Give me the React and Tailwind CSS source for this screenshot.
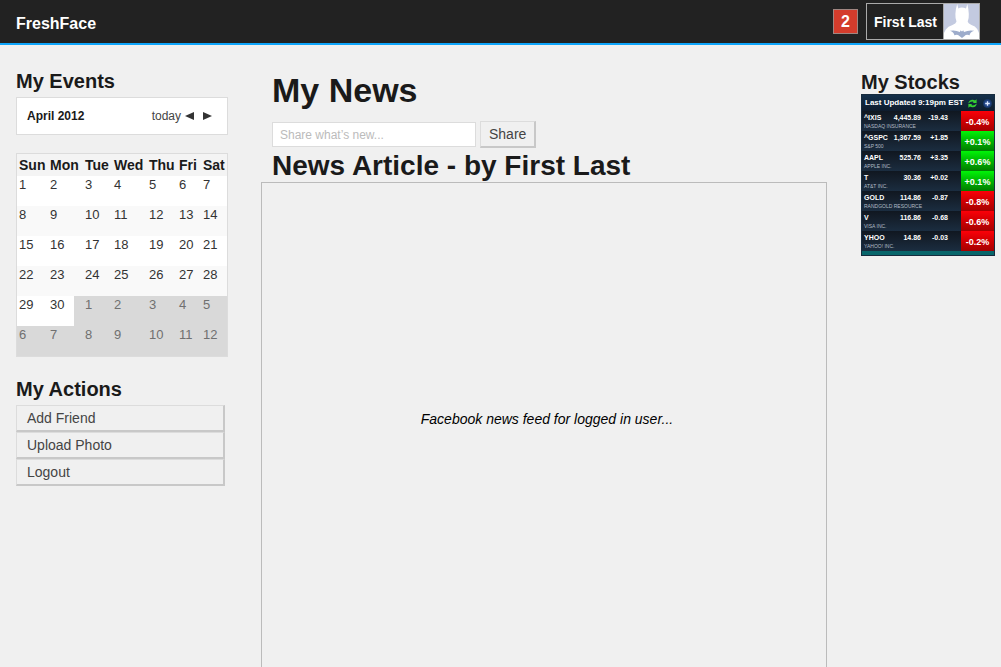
import React from "react";

const weekdays = ["Sun", "Mon", "Tue", "Wed", "Thu", "Fri", "Sat"];

const columns = ["w-[31px]", "w-[26px]", "w-[38px]", "w-[35px]", "w-[30px]", "w-[24px]", "w-[26px]"];

const weeks = [
  [1, 2, 3, 4, 5, 6, 7],
  [8, 9, 10, 11, 12, 13, 14],
  [15, 16, 17, 18, 19, 20, 21],
  [22, 23, 24, 25, 26, 27, 28],
  [29, 30, 1, 2, 3, 4, 5],
  [6, 7, 8, 9, 10, 11, 12],
];

const actions = ["Add Friend", "Upload Photo", "Logout"];

const stocks = [
  { symbol: "^IXIS", name: "NASDAQ INSURANCE", price: "4,445.89", change: "-19.43", percent: "-0.4%" },
  { symbol: "^GSPC", name: "S&P 500", price: "1,367.59", change: "+1.85", percent: "+0.1%" },
  { symbol: "AAPL", name: "APPLE INC.", price: "525.76", change: "+3.35", percent: "+0.6%" },
  { symbol: "T", name: "AT&T INC.", price: "30.36", change: "+0.02", percent: "+0.1%" },
  { symbol: "GOLD", name: "RANDGOLD RESOURCE", price: "114.86", change: "-0.87", percent: "-0.8%" },
  { symbol: "V", name: "VISA INC.", price: "116.86", change: "-0.68", percent: "-0.6%" },
  { symbol: "YHOO", name: "YAHOO! INC.", price: "14.86", change: "-0.03", percent: "-0.2%" },
];

const raised =
  "border border-t-[#dcdcdc] border-l-[#dcdcdc] border-r-2 border-b-2 border-r-[#c8c8c8] border-b-[#c8c8c8] bg-[#f0f0f0] text-sm text-[#444]";

function Avatar() {
  return (
    <svg viewBox="0 0 35 35" className="size-[35px]" role="img" aria-label="Profile picture">
      <rect width="35" height="35" fill="#c3cae0" />
      <path
        d="M13.2 0 L14.3 4.6 Q17.5 2.6 22 4.6 L23.3 0 Q24.6 5 24.8 10 Q25 15 23.7 17.5 Q24 19.5 27 20.8 Q31.5 22 33.2 25 L35 29 V35 H0 V29 L1.8 25.5 Q4 22 8.5 21 Q12 19.5 12.5 17.5 Q11.2 15 11.4 10 Q11.8 4 13.2 0 Z"
        fill="#fff"
      />
      <path
        d="M6 26.8 Q11 25.6 15.8 28 L16.7 26.3 L17.4 27.2 H18.4 L19.2 26.3 L20 28 Q25 25.6 30.2 26.8 Q26 28.2 25.6 31.2 Q22 30.2 20.6 32 L18 34 L15.4 32 Q13.5 30.2 10.4 31.2 Q9.8 28.2 6 26.8 Z"
        fill="#9daccb"
      />
    </svg>
  );
}

function Header() {
  return (
    <header className="flex h-[45px] items-start justify-between border-b-2 border-[#0ea5fa] bg-[#222] pr-[21px] pl-4 text-white">
      <a href="#home" className="pt-3 text-base leading-6 font-bold">
        FreshFace
      </a>
      <div className="flex items-start gap-2 pt-[3px]">
        <button
          type="button"
          aria-label="2 notifications"
          className="mt-1.5 size-[25px] border border-[#a08681] bg-[#d43c2c] text-base leading-5 font-bold"
        >
          2
        </button>
        <a href="#profile" className="flex h-[37px] items-center border border-[#aaa] pl-[7px] text-sm font-bold">
          <span className="pr-1.5">First Last</span>
          <span className="border-l border-[#aaa]">
            <Avatar />
          </span>
        </a>
      </div>
    </header>
  );
}

function Calendar() {
  return (
    <section>
      <h2 className="text-xl leading-6 font-bold">My Events</h2>
      <div className="mt-1 flex h-[38px] items-center border border-[#dcdcdc] bg-white px-2.5 text-xs">
        <span className="flex-1 font-bold">April 2012</span>
        <button type="button" className="text-[#444]">today</button>
        <button type="button" aria-label="Previous month" className="ml-1 text-[#333]">
          <svg viewBox="0 0 9 8" className="h-2 w-[9px]" fill="currentColor"><path d="M0 4 L9 0 V8 Z" /></svg>
        </button>
        <button type="button" aria-label="Next month" className="mr-[5px] ml-[9px] text-[#333]">
          <svg viewBox="0 0 9 8" className="h-2 w-[9px]" fill="currentColor"><path d="M9 4 L0 0 V8 Z" /></svg>
        </button>
      </div>
      <div className="mt-[18px] border border-[#dcdcdc]">
        <table className="w-full table-fixed border-collapse">
          <colgroup>
            {columns.map((c) => (
              <col key={c} className={c} />
            ))}
          </colgroup>
          <thead>
            <tr className="h-[22px] bg-[#f4f4f4] text-left text-sm leading-[22px]">
              {weekdays.map((d, i) => (
                <th key={d} className={i === 2 ? "p-0 pl-[11px]" : "p-0 pl-0.5"}>{d}</th>
              ))}
            </tr>
          </thead>
          <tbody>
            {weeks.map((week, w) => (
              <tr key={w} className={w % 2 ? "h-[30px] bg-[#f9f9f9]" : "h-[30px] bg-white"}>
                {week.map((day, i) => {
                  const other = w === 5 || (w === 4 && i > 1);
                  return (
                    <td
                      key={i}
                      className={`py-0 pr-0 align-top text-[13px] leading-[18px] ${i === 2 ? "pl-[11px]" : "pl-0.5"} ${
                        other ? "bg-[#d9d9d9] text-[#707070]" : "text-[#333]"
                      }`}
                    >
                      {day}
                    </td>
                  );
                })}
              </tr>
            ))}
          </tbody>
        </table>
      </div>
    </section>
  );
}

function Actions() {
  return (
    <section className="mt-5">
      <h2 className="text-xl leading-6 font-bold">My Actions</h2>
      <div className="mt-1 mr-[3px] flex flex-col">
        {actions.map((a) => (
          <button key={a} type="button" className={`${raised} h-[27px] px-2.5 text-left leading-6`}>
            {a}
          </button>
        ))}
      </div>
    </section>
  );
}

function News() {
  return (
    <main className="flex flex-col">
      <div className="px-[11px]">
        <h1 className="text-[34px] leading-10 font-bold">My News</h1>
        <form className="mt-[11px] flex items-center gap-1" onSubmit={(e) => e.preventDefault()}>
          <input
            type="text"
            aria-label="Share what's new"
            placeholder="Share what’s new..."
            className="h-[25px] w-[204px] border border-[#dcdcdc] bg-white px-[7px] text-xs placeholder:text-[#bbb]"
          />
          <button type="submit" className={`${raised} h-[27px] px-2 leading-6`}>
            Share
          </button>
        </form>
        <h2 className="mt-0.5 text-[28px] leading-8 font-bold">News Article - by First Last</h2>
      </div>
      <article className="flex-1 border border-b-0 border-[#bbb] pt-[226px] pb-10 pl-1.5 text-center">
        <p className="text-sm leading-5 text-black italic">Facebook news feed for logged in user...</p>
      </article>
    </main>
  );
}

function Stocks() {
  return (
    <section>
      <h2 className="text-xl leading-6 font-bold">My Stocks</h2>
      <div className="border border-[#172c3e] bg-[#172432] font-bold text-white">
        <div className="flex h-4 items-center gap-1.5 bg-linear-to-b from-[#14304a] to-[#0e1c2d] px-[3px] text-[8px] leading-4">
          <span className="w-[97px] whitespace-nowrap">Last Updated 9:19pm EST</span>
          <button type="button" aria-label="Refresh">
            <svg viewBox="0 0 9 9" className="size-[9px]" fill="#35cf32">
              <path d="M.2 4.6 Q.8 1.2 4 .7 Q5.8 .5 7 1.4 L8.6 .2 V4 H4.8 L5.8 2.9 Q3.2 1.8 .2 4.6 Z" />
              <path d="M8.8 4.4 Q8.2 7.8 5 8.3 Q3.2 8.5 2 7.6 L.4 8.8 V5 H4.2 L3.2 6.1 Q5.8 7.2 8.8 4.4 Z" />
            </svg>
          </button>
          <button type="button" aria-label="Add stock">
            <svg viewBox="0 0 9 9" className="size-[9px]">
              <circle cx="4.5" cy="4.5" r="4" fill="#24468a" stroke="#173766" />
              <path d="M4.5 2.2 V6.8 M2.2 4.5 H6.8" stroke="#dce8ff" strokeWidth="1.3" />
            </svg>
          </button>
        </div>
        <table className="w-full table-fixed border-collapse">
          <colgroup>
            <col />
            <col className="w-[27px]" />
            <col className="w-[13px]" />
            <col className="w-[33px]" />
          </colgroup>
          <tbody>
            {stocks.map((s) => (
              <tr key={s.symbol} className="h-5 bg-linear-to-b from-[#101720] to-[#1b2d40] text-[7px] leading-[8px]">
                <td className="p-0 pt-[3px] pl-0.5 align-top whitespace-nowrap">
                  <div className="flex justify-between">
                    <span>{s.symbol}</span>
                    <span>{s.price}</span>
                  </div>
                  <div className="text-[5px] font-normal text-[#b2bbc5]">{s.name}</div>
                </td>
                <td className="p-0 pt-[3px] text-right align-top">{s.change}</td>
                <td className="p-0" />
                <td
                  className={`p-0 pt-0.5 text-center text-[9px] ${
                    s.percent.startsWith("+")
                      ? "bg-linear-to-b from-[#00f408] to-[#007c00]"
                      : "bg-linear-to-b from-[#fb0008] to-[#a50000]"
                  }`}
                >
                  {s.percent}
                </td>
              </tr>
            ))}
          </tbody>
        </table>
        <div className="h-1 bg-[#08666b]" />
      </div>
    </section>
  );
}

export default function App() {
  return (
    <div className="flex min-h-screen flex-col bg-[#f0f0f0] font-['Liberation_Sans',Arial,sans-serif] text-[#1a1a1a]">
      <Header />
      <div className="grid flex-1 grid-cols-[212px_minmax(0,1fr)_134px] pr-1.5 pl-4">
        <aside className="pt-6">
          <Calendar />
          <Actions />
        </aside>
        <div className="mr-[34px] ml-[33px] grid pt-[25px]">
          <News />
        </div>
        <aside className="pt-[25px]">
          <Stocks />
        </aside>
      </div>
    </div>
  );
}
